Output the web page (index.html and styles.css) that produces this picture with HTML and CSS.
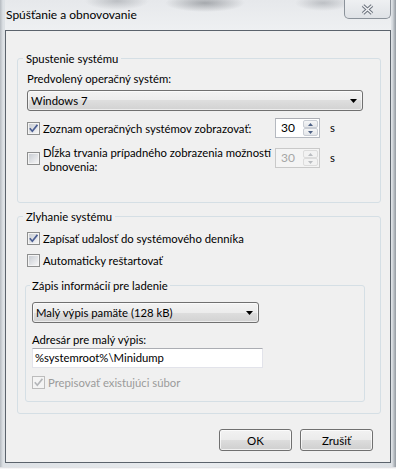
FILE: index.html
```html
<!DOCTYPE html>
<html lang="sk">
<head>
    <meta charset="UTF-8">
    <meta name="viewport" content="width=device-width, initial-scale=1.0">
    <title>Spúšťanie a obnovovanie</title>
    <link rel="stylesheet" href="styles.css">
</head>
<body>
    <div class="window">
        <div class="titleBar">
            <span class="title">Spúšťanie a obnovovanie</span>
            <button class="closeButton" type="button" aria-label="Zavrieť">
                <svg width="13" height="11" viewBox="0 0 13 11">
                    <path d="M2 1.5 L11 9.5 M11 1.5 L2 9.5" stroke="#6f7680" stroke-width="3.6" fill="none"/>
                    <path d="M2 1.5 L11 9.5 M11 1.5 L2 9.5" stroke="#f4f5f7" stroke-width="1.4" fill="none"/>
                </svg>
            </button>
        </div>

        <div class="client">
            <fieldset class="group">
                <legend>Spustenie systému</legend>
                <div class="fieldLabel">Predvolený operačný systém:</div>
                <div class="combo comboWide">
                    <span>Windows 7</span>
                    <svg width="7" height="4" viewBox="0 0 7 4"><path d="M0 0 L7 0 L3.5 4Z" fill="#000"/></svg>
                </div>

                <div class="optionRow">
                    <label class="check">
                        <span class="box">
                            <svg width="9" height="9" viewBox="0 0 9 9"><path d="M0.8 4.3 L3.3 7.2 L8.4 0.8" stroke="#4a5d92" stroke-width="1.7" fill="none"/></svg>
                        </span>
                        <span>Zoznam operačných systémov zobrazovať:</span>
                    </label>
                    <div class="spinner">
                        <span class="spinValue">30</span>
                        <span class="spinButtons">
                            <span class="spinHalf"><svg width="5" height="3" viewBox="0 0 5 3"><path d="M0 3 L2.5 0 L5 3Z" fill="#4d6185"/></svg></span>
                            <span class="spinHalf"><svg width="5" height="3" viewBox="0 0 5 3"><path d="M0 0 L5 0 L2.5 3Z" fill="#4d6185"/></svg></span>
                        </span>
                    </div>
                    <span class="unit">s</span>
                </div>

                <div class="optionRow tall">
                    <label class="check">
                        <span class="box"></span>
                        <span class="twoLines">Dĺžka trvania prípadného zobrazenia možností<br>obnovenia:</span>
                    </label>
                    <div class="spinner disabled">
                        <span class="spinValue">30</span>
                        <span class="spinButtons">
                            <span class="spinHalf"><svg width="5" height="3" viewBox="0 0 5 3"><path d="M0 3 L2.5 0 L5 3Z" fill="#b9bcc0"/></svg></span>
                            <span class="spinHalf"><svg width="5" height="3" viewBox="0 0 5 3"><path d="M0 0 L5 0 L2.5 3Z" fill="#b9bcc0"/></svg></span>
                        </span>
                    </div>
                    <span class="unit">s</span>
                </div>
            </fieldset>

            <fieldset class="group failureGroup">
                <legend>Zlyhanie systému</legend>
                <label class="check">
                    <span class="box">
                        <svg width="9" height="9" viewBox="0 0 9 9"><path d="M0.8 4.3 L3.3 7.2 L8.4 0.8" stroke="#4a5d92" stroke-width="1.7" fill="none"/></svg>
                    </span>
                    <span>Zapísať udalosť do systémového denníka</span>
                </label>
                <label class="check checkRow">
                    <span class="box"></span>
                    <span>Automaticky reštartovať</span>
                </label>

                <fieldset class="innerGroup">
                    <legend>Zápis informácií pre ladenie</legend>
                    <div class="combo comboSmall">
                        <span>Malý výpis pamäte (128 kB)</span>
                        <svg width="7" height="4" viewBox="0 0 7 4"><path d="M0 0 L7 0 L3.5 4Z" fill="#000"/></svg>
                    </div>
                    <div class="fieldLabel spaced">Adresár pre malý výpis:</div>
                    <div class="textInput">%systemroot%\Minidump</div>
                    <label class="check checkRow disabledText">
                        <span class="box boxDisabled">
                            <svg width="9" height="9" viewBox="0 0 9 9"><path d="M0.8 4.3 L3.3 7.2 L8.4 0.8" stroke="#b4b6b9" stroke-width="1.7" fill="none"/></svg>
                        </span>
                        <span>Prepisovať existujúci súbor</span>
                    </label>
                </fieldset>
            </fieldset>

            <div class="buttonRow">
                <button class="dialogButton" type="button">OK</button>
                <button class="dialogButton" type="button">Zrušiť</button>
            </div>
        </div>
    </div>
    <div class="desktopStrip"></div>
</body>
</html>
```

FILE: styles.css
```css
body {
    margin: 0;
    width: 396px;
    height: 472px;
    overflow: hidden;
    font-family: 'Lato', 'Liberation Sans', sans-serif;
    font-size: 11.3px;
    line-height: 15px;
    color: #000;
    background-color: #ffffff;
}

/* glass frame round the dialog */
.window {
    height: 467px;
    box-sizing: border-box;
    padding: 0 5px 4px 5px;
    display: flex;
    flex-direction: column;
    background: linear-gradient(to right, #b5bac0 0, #dde1e5 3px, #e9ecef 50%, #dde1e5 calc(100% - 4px), #9299a0 100%);
}

.titleBar {
    height: 30px;
    flex: none;
    display: flex;
    justify-content: space-between;
    align-items: flex-start;
    background:
        radial-gradient(ellipse 32px 9px at 112px 1px, rgba(110, 115, 122, 0.35), transparent),
        radial-gradient(ellipse 40px 9px at 200px 3px, rgba(85, 90, 96, 0.45), transparent),
        radial-gradient(ellipse 28px 8px at 318px 3px, rgba(110, 115, 122, 0.35), transparent),
        linear-gradient(#e6e8eb, #eef0f2);
}

.title {
    padding: 7px 0 0 1px;
    font-size: 12px;
}

.closeButton {
    width: 47px;
    height: 19px;
    padding: 0;
    border: 1px solid #8b929a;
    border-top: none;
    border-radius: 0 0 5px 5px;
    background: linear-gradient(#eef0f2, #dfe2e6);
    display: flex;
    align-items: center;
    justify-content: center;
}

.client {
    flex: 1;
    border: 1px solid #5b636c;
    background-color: #f0f0f0;
    padding: 0 9px 0 11px;
    display: flex;
    flex-direction: column;
}

/* group boxes */
.group {
    margin: 20px 0 0 0;
    padding: 5px 9px 28px 9px;
    border: 1px solid #d5dfe5;
    border-radius: 3px;
    min-width: 0;
}

.group legend {
    padding: 0 3px;
    margin-left: -4px;
}

.failureGroup {
    margin-top: 6px;
    padding: 7px 9px 11px 9px;
}

.innerGroup {
    margin: 10px 6px 0 -2px;
    padding: 9px 6px 11px 6px;
    border: 1px solid #d5dfe5;
    border-radius: 3px;
    min-width: 0;
}

.innerGroup legend {
    padding: 0 2px;
    margin-left: -2px;
}

.fieldLabel.spaced {
    margin-top: 9px;
}

/* drop down lists */
.combo {
    height: 21px;
    box-sizing: border-box;
    border: 1px solid #707070;
    border-radius: 3px;
    background: linear-gradient(#f3f3f3 0%, #ececec 50%, #dedede 50%, #d2d2d2 100%);
    box-shadow: inset 0 0 0 1px rgba(255, 255, 255, 0.6);
    display: flex;
    align-items: center;
    justify-content: space-between;
    padding: 0 5px 0 3px;
}

.comboWide {
    margin-top: 4px;
    width: 336px;
}

.comboSmall {
    width: 227px;
}

.optionRow {
    display: flex;
    align-items: center;
    margin-top: 7px;
}

.optionRow .check {
    width: 246px;
    flex: none;
}

.optionRow.tall {
    align-items: flex-start;
}

.optionRow.tall .check {
    align-items: flex-start;
}

.optionRow.tall .box {
    margin-top: 7px;
}

.optionRow.tall .spinner,
.optionRow.tall .unit {
    margin-top: 3px;
}

.twoLines {
    white-space: nowrap;
    line-height: 14px;
    padding-top: 1px;
}

/* check boxes */
.check {
    display: flex;
    align-items: center;
    gap: 3px;
}

.checkRow {
    margin-top: 7px;
}

.box {
    width: 13px;
    height: 13px;
    flex: none;
    box-sizing: border-box;
    border: 1px solid #8e8f8f;
    padding: 1px;
    background: linear-gradient(135deg, #c9cdd3, #f5f5f6) content-box, linear-gradient(#f4f4f4, #f4f4f4) padding-box;
    display: flex;
    align-items: center;
    justify-content: center;
    overflow: visible;
}

.box svg {
    flex: none;
}

.boxDisabled {
    border-color: #bcbcbc;
    background: #f4f4f4;
}

.disabledText {
    color: #9b9b9b;
}

/* number boxes */
.spinner {
    margin-left: 2px;
    width: 45px;
    height: 20px;
    box-sizing: border-box;
    border: 1px solid #b5b9c0;
    border-top-color: #abadb3;
    background-color: #ffffff;
    display: flex;
}

.spinValue {
    flex: 1;
    padding-left: 5px;
    line-height: 18px;
    font-size: 12px;
}

.spinButtons {
    width: 15px;
    padding: 1px 1px 1px 0;
    display: flex;
    flex-direction: column;
}

.spinHalf {
    flex: 1;
    box-sizing: border-box;
    border: 1px solid #c9cdd4;
    border-radius: 2px;
    background: linear-gradient(#f5f6f7, #e4e6e9);
    display: flex;
    align-items: center;
    justify-content: center;
}

.spinner.disabled {
    border-color: #c9c9c9;
    background-color: #f4f4f4;
    color: #a6a6a6;
}

.spinner.disabled .spinHalf {
    border-color: #dcdcdc;
    background: #f2f2f2;
}

.unit {
    margin-left: 10px;
    line-height: 20px;
}

.textInput {
    margin-top: 1px;
    width: 231px;
    height: 20px;
    box-sizing: border-box;
    border: 1px solid #e2e3ea;
    border-top-color: #abadb3;
    background-color: #ffffff;
    padding-left: 2px;
    line-height: 18px;
}

.buttonRow {
    margin-top: 15px;
    display: flex;
    justify-content: flex-end;
    gap: 8px;
    padding-right: 8px;
}

.dialogButton {
    width: 73px;
    height: 22px;
    padding: 0;
    border: 1px solid #707070;
    border-radius: 3px;
    background: linear-gradient(#f2f2f2 0%, #ebebeb 50%, #dddddd 50%, #cfcfcf 100%);
    box-shadow: inset 0 0 0 1px rgba(255, 255, 255, 0.7);
    font-family: inherit;
    font-size: 11.5px;
    color: #000;
}

/* window behind the dialog */
.desktopStrip {
    height: 5px;
    background: linear-gradient(#d8dade, #ffffff 2px);
}
```
